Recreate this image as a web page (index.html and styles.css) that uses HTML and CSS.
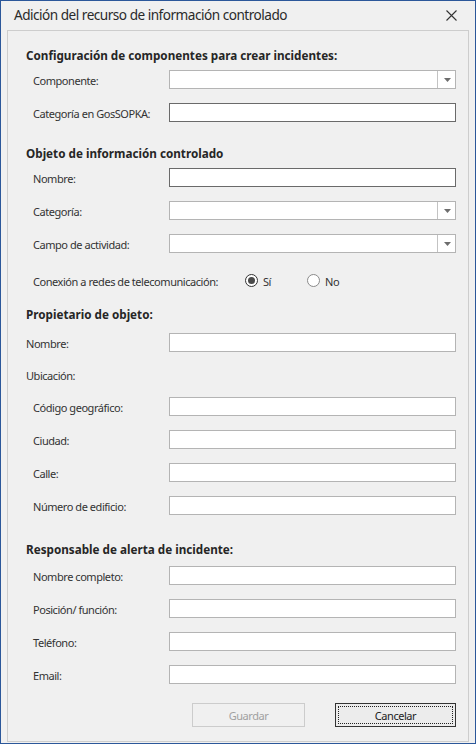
FILE: index.html
```html
<!DOCTYPE html>
<html lang="es">
<head>
<meta charset="utf-8">
<title>Adición del recurso de información controlado</title>
<link rel="stylesheet" href="styles.css">
</head>
<body>
<div class="window">
  <div class="titlebar">
    <span class="title">Adición del recurso de información controlado</span>
    <svg class="close" width="11" height="11" viewBox="0 0 11 11"><path d="M0.5 0.5 L10.5 10.5 M10.5 0.5 L0.5 10.5" stroke="#333" stroke-width="1.1" fill="none"/></svg>
  </div>
  <div class="panel">
    <div class="section-title first">Configuración de componentes para crear incidentes:</div>
    <div class="row indent"><span class="label">Componente:</span><div class="combo"><span class="combo-btn"><svg width="7" height="4" viewBox="0 0 7 4"><path d="M0 0 H7 L3.5 4 Z" fill="#6d6d6d"/></svg></span></div></div>
    <div class="row indent"><span class="label">Categoría en GosSOPKA:</span><div class="field dark"></div></div>

    <div class="section-title s2">Objeto de información controlado</div>
    <div class="row indent"><span class="label">Nombre:</span><div class="field dark"></div></div>
    <div class="row indent"><span class="label">Categoría:</span><div class="combo"><span class="combo-btn"><svg width="7" height="4" viewBox="0 0 7 4"><path d="M0 0 H7 L3.5 4 Z" fill="#6d6d6d"/></svg></span></div></div>
    <div class="row indent"><span class="label">Campo de actividad:</span><div class="combo"><span class="combo-btn"><svg width="7" height="4" viewBox="0 0 7 4"><path d="M0 0 H7 L3.5 4 Z" fill="#6d6d6d"/></svg></span></div></div>
    <div class="row indent radio-row"><span class="label wide">Conexión a redes de telecomunicación:</span>
      <div class="radios">
        <span class="radio checked"><span class="dot"></span></span><span class="radio-text">Sí</span>
        <span class="radio off"></span><span class="radio-text">No</span>
      </div>
    </div>

    <div class="section-title s3">Propietario de objeto:</div>
    <div class="row owner-first"><span class="label">Nombre:</span><div class="field"></div></div>
    <div class="row sub"><span class="label">Ubicación:</span></div>
    <div class="row indent"><span class="label">Código geográfico:</span><div class="field"></div></div>
    <div class="row indent"><span class="label">Ciudad:</span><div class="field"></div></div>
    <div class="row indent"><span class="label">Calle:</span><div class="field"></div></div>
    <div class="row indent"><span class="label">Número de edificio:</span><div class="field"></div></div>

    <div class="section-title s4">Responsable de alerta de incidente:</div>
    <div class="row indent resp-first"><span class="label">Nombre completo:</span><div class="field"></div></div>
    <div class="row indent"><span class="label">Posición/ función:</span><div class="field"></div></div>
    <div class="row indent"><span class="label">Teléfono:</span><div class="field"></div></div>
    <div class="row indent"><span class="label">Email:</span><div class="field"></div></div>

    <div class="buttons">
      <span class="btn disabled">Guardar</span>
      <span class="btn default"><span class="focus">Cancelar</span></span>
    </div>
  </div>
</div>
</body>
</html>
```

FILE: styles.css
```css
* { box-sizing: border-box; }
html, body { margin: 0; padding: 0; background: #f0f0f0; }
body {
  font-family: "Noto Sans", "Open Sans", sans-serif;
  font-size: 11px;
  letter-spacing: -0.45px;
  color: #333;
}
.window {
  width: 476px;
  height: 744px;
  border: 1px solid #2b579a;
  background: #f0f0f0;
  display: flex;
  flex-direction: column;
}
.titlebar {
  height: 29px;
  display: flex;
  align-items: center;
  justify-content: space-between;
  padding: 0 18px 2px 13px;
}
.title {
  font-size: 13.6px;
  letter-spacing: -0.5px;
  color: #2a2a2a;
}
.close { display: block; margin-top: 2px; }
.panel {
  flex: 1;
  margin: 0 6px 1px 6px;
  border: 1px solid #cdcdcd;
  padding: 16px 12px 14px 18px;
  display: flex;
  flex-direction: column;
}
.section-title {
  font-weight: bold;
  height: 16px;
  line-height: 16px;
  color: #262626;
  font-size: 11.7px;
  letter-spacing: 0;
}
.section-title.s2 { margin-top: 16px; }
.section-title.s3 { margin-top: 9px; }
.section-title.s4 { margin-top: 19px; }
.row {
  height: 33px;
  display: flex;
  align-items: center;
  flex: none;
}
.row.owner-first { margin-top: 4px; }
.row.resp-first { margin-top: 2px; }
.row.sub { height: 31px; }
.row.radio-row { margin-top: 4px; }
.row.indent .label { padding-left: 7px; }
.label {
  flex: 1;
  white-space: nowrap;
  padding-top: 1px;
}
.field, .combo {
  width: 287px;
  height: 19px;
  background: #fff;
  border: 1px solid #b4b4b4;
}
.field.dark { border-color: #6a6a6a; }
.combo {
  display: flex;
  justify-content: flex-end;
}
.combo-btn {
  width: 18px;
  height: 100%;
  border-left: 1px solid #c3c3c3;
  display: flex;
  align-items: center;
  justify-content: center;
}
.combo-btn svg { display: block; margin-left: 1px; }
.label.wide { flex: none; width: 219px; }
.radios {
  display: flex;
  align-items: center;
}
.radio {
  width: 13px;
  height: 13px;
  border-radius: 50%;
  background: #fff;
  display: flex;
  align-items: center;
  justify-content: center;
}
.radio.checked { border: 1px solid #333; }
.radio.off { border: 1px solid #8a8a8a; margin-left: 36px; }
.dot {
  width: 7px;
  height: 7px;
  border-radius: 50%;
  background: #4a4a4a;
}
.radio-text { margin-left: 5px; padding-top: 1px; }
.buttons {
  margin-top: 12px;
  display: flex;
  justify-content: flex-end;
  gap: 30px;
  flex: none;
}
.btn {
  height: 24px;
  display: flex;
  align-items: center;
  justify-content: center;
}
.btn.disabled {
  width: 113px;
  border: 1px solid #cccccc;
  color: #a0a0a0;
  background: #f0f0f0;
}
.btn.default {
  width: 121px;
  border: 1px solid #333;
  background: #ececec;
  padding: 2px;
}
.focus {
  flex: 1;
  align-self: stretch;
  display: flex;
  align-items: center;
  justify-content: center;
  border: 1px dotted #222;
  color: #222;
}
```
